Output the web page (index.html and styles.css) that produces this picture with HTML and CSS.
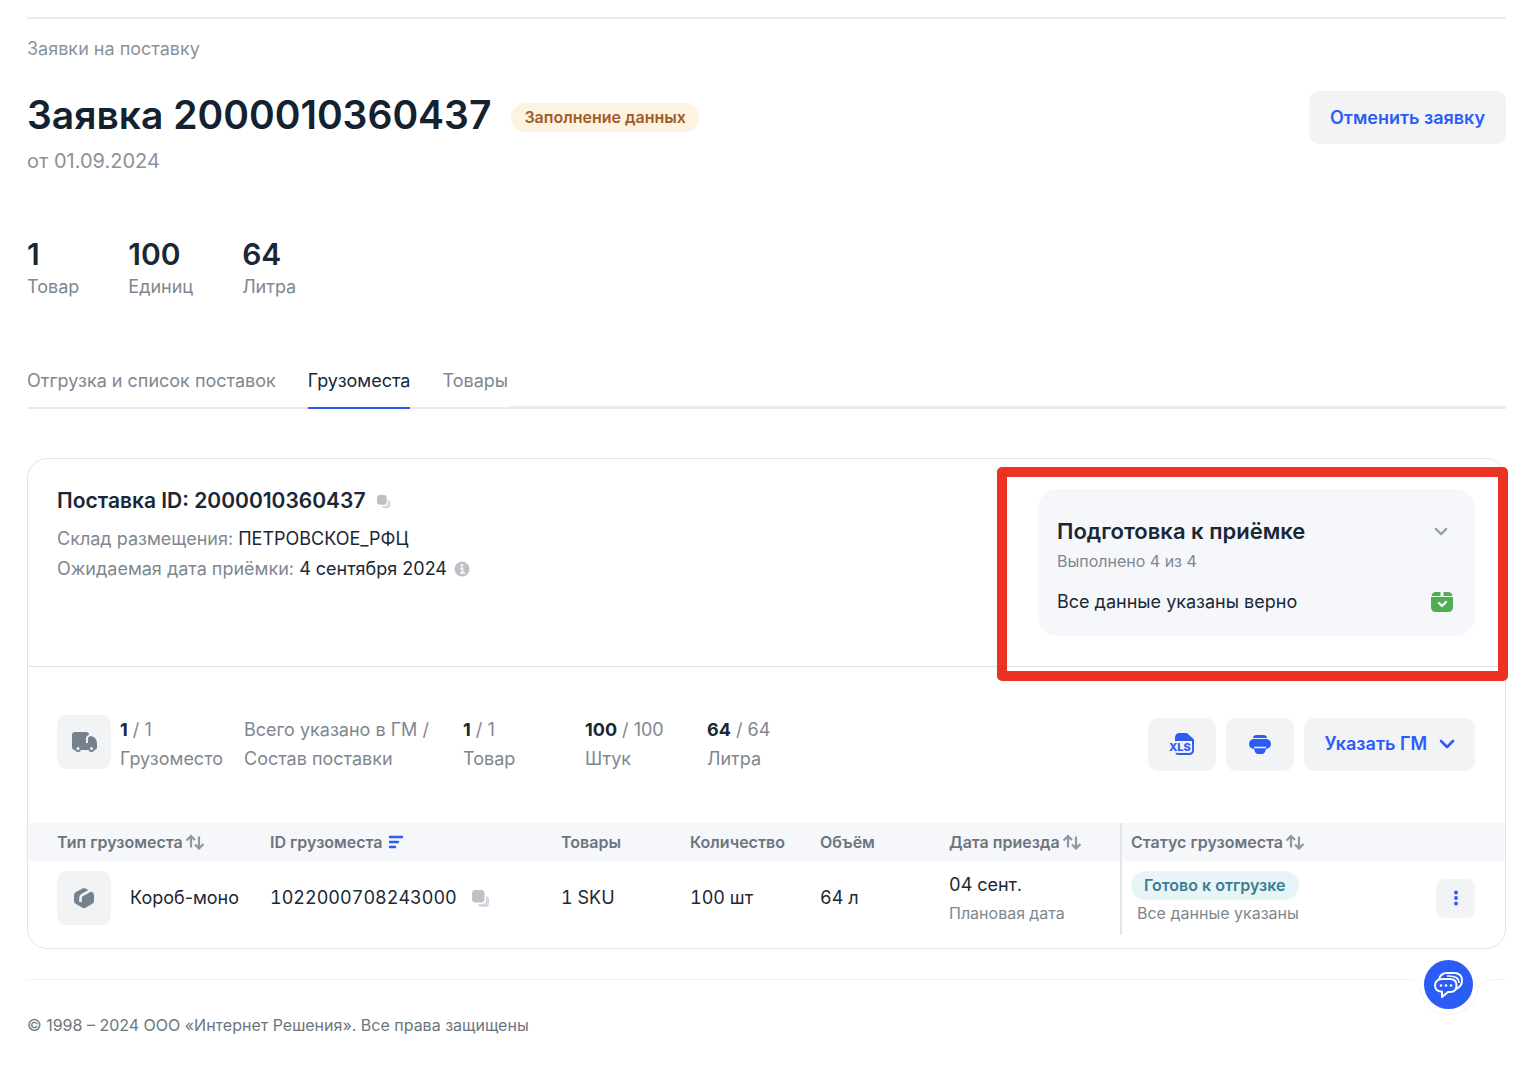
FILE: index.html
```html
<!DOCTYPE html>
<html lang="ru">
<head>
<meta charset="utf-8">
<meta name="viewport" content="width=device-width, initial-scale=1">
<title>Заявка 2000010360437</title>
<link rel="stylesheet" href="styles.css">
</head>
<body>
<svg class="sprite" aria-hidden="true">
  <symbol id="copy" viewBox="0 0 18 18">
    <rect x="6" y="6" width="11" height="11" rx="4" fill="#d3d7db"/>
    <rect x="0" y="0" width="14" height="14" rx="4" fill="#fff"/>
    <rect x="0" y="0" width="12.500" height="12.500" rx="3.500" fill="#bcc1c7"/>
  </symbol>
  <symbol id="sort" viewBox="0 0 20 16">
    <path d="M6 13.500V2M1.500 6.500 6 2l4 4M14 2.500v12M10 10.500l4 4 4.500-4.500" fill="none" stroke="#8f989f" stroke-width="2.200"/>
  </symbol>
  <symbol id="chevron" viewBox="0 0 16 10">
    <path d="M2 2l6 6 6-6" fill="none" stroke="currentColor" stroke-width="2.600" stroke-linecap="round" stroke-linejoin="round"/>
  </symbol>
</svg>
<div class="page">
  <header class="top">
    <a class="crumb" href="#">Заявки на поставку</a>
    <div class="heading">
      <h1>Заявка 2000010360437</h1>
      <span class="badge badge-draft">Заполнение данных</span>
      <button class="btn cancel" type="button">Отменить заявку</button>
    </div>
    <p class="date">от 01.09.2024</p>
  </header>

  <dl class="stats">
    <div><dd>1</dd><dt>Товар</dt></div>
    <div><dd>100</dd><dt>Единиц</dt></div>
    <div><dd>64</dd><dt>Литра</dt></div>
  </dl>

  <nav class="tabs">
    <a href="#">Отгрузка и список поставок</a>
    <a href="#" class="active" aria-current="page">Грузоместа</a>
    <a href="#">Товары</a>
  </nav>

  <main class="card">
    <section class="supply">
      <div class="supply-info">
        <h2>Поставка ID: 2000010360437
          <button class="plain" type="button" aria-label="Скопировать"><svg width="14" height="14"><use href="#copy"/></svg></button>
        </h2>
        <p>Склад размещения: <b>ПЕТРОВСКОЕ_РФЦ</b></p>
        <p>Ожидаемая дата приёмки: <b>4 сентября 2024</b>
          <svg class="info" width="16" height="16" viewBox="0 0 16 16"><circle cx="8" cy="8" r="7.500" fill="#bcc1c7"/><circle cx="8" cy="4.300" r="1.300" fill="#fff"/><path d="M6 7.200h2.500V12M6 12h5" fill="none" stroke="#fff" stroke-width="1.600"/></svg>
        </p>
      </div>
      <div class="ready">
        <div class="ready-head">
          <h2>Подготовка к приёмке</h2>
          <button class="plain fold" type="button" aria-label="Развернуть"><svg width="14" height="9"><use href="#chevron"/></svg></button>
        </div>
        <p class="ready-count">Выполнено 4 из 4</p>
        <div class="ready-row">
          <span>Все данные указаны верно</span>
          <svg width="24" height="22" viewBox="0 0 24 22"><path d="M6 1h4.500v4H1.500C2 2.500 3.500 1 6 1zM13.500 1H18c2.500 0 4 1.500 4.500 4h-9z" fill="#4fae50"/><path d="M1 6h22v10q0 5-5 5H6q-5 0-5-5z" fill="#4fae50"/><path d="M9 12l3 3 4-4" fill="none" stroke="#fff" stroke-width="2.200" stroke-linecap="round" stroke-linejoin="round"/></svg>
        </div>
      </div>
    </section>

    <section class="summary">
      <div class="figures">
        <div class="tile">
          <svg width="26" height="22" viewBox="0 0 26 22"><path d="M4 1h11q3 0 3 3l-2 1q-1 1-1 3v4h2V8q0-3 3-3 6 1 6 8v3q0 3-3 3H4q-3 0-3-3V4q0-3 3-3z" fill="#76818f"/><path d="M15.500 12V8q0-3 3-3" fill="none" stroke="#f1f3f5" stroke-width="1"/><circle cx="7" cy="18" r="3" fill="#76818f"/><circle cx="20.500" cy="18" r="3" fill="#76818f"/><circle cx="7" cy="17.500" r="1.500" fill="#f1f3f5"/><circle cx="20.500" cy="17.500" r="1.500" fill="#f1f3f5"/></svg>
        </div>
        <p><b>1</b> / 1<br>Грузоместо</p>
        <p>Всего указано в ГМ /<br>Состав поставки</p>
        <p><b>1</b> / 1<br>Товар</p>
        <p><b>100</b> / 100<br>Штук</p>
        <p><b>64</b> / 64<br>Литра</p>
      </div>
      <div class="actions">
        <button class="btn btn-icon" type="button" aria-label="Скачать XLS">
          <svg width="26" height="24" viewBox="0 0 26 24"><path d="M6 9V6q0-5 5-5h7l6 6v2z" fill="#2b5cf6"/><path d="M17 2l7 6v10q0 4-4 4H10q-2 0-3-1" fill="none" stroke="#2b5cf6" stroke-width="2"/><text x="0" y="19" class="xls">XLS</text></svg>
        </button>
        <button class="btn btn-icon" type="button" aria-label="Печать">
          <svg width="24" height="20" viewBox="0 0 24 20"><path d="M5 4q0-3 4-3h6q4 0 4 3z" fill="#2b5cf6"/><rect x="1" y="5" width="22" height="10" rx="5" fill="#2b5cf6"/><path d="M6 13h12v2q-1 5-4 5h-4q-3 0-4-5z" fill="#2b5cf6"/><path d="M6 13.500h12" stroke="#f1f3f5" stroke-width="1.500"/></svg>
        </button>
        <button class="btn" type="button">Указать ГМ <svg width="16" height="10"><use href="#chevron"/></svg></button>
      </div>
    </section>

    <table class="cargo">
      <colgroup><col class="c-type"><col class="c-id"><col class="c-goods"><col class="c-qty"><col class="c-vol"><col class="c-date"><col><col class="c-menu"></colgroup>
      <thead>
        <tr>
          <th>Тип грузоместа <svg width="20" height="16"><use href="#sort"/></svg></th>
          <th>ID грузоместа <svg class="sorted" width="16" height="14" viewBox="0 0 16 14"><path d="M2 2h12M2 7h8M2 12h5" stroke="#2b5cf6" stroke-width="2.400" stroke-linecap="round"/></svg></th>
          <th>Товары</th>
          <th>Количество</th>
          <th>Объём</th>
          <th>Дата приезда <svg width="20" height="16"><use href="#sort"/></svg></th>
          <th class="status">Статус грузоместа <svg width="20" height="16"><use href="#sort"/></svg></th>
          <th></th>
        </tr>
      </thead>
      <tbody>
        <tr>
          <td>
            <div class="type">
              <div class="tile"><svg width="22" height="22" viewBox="0 0 22 22"><path d="M9.500 1.500Q11 .6 12.500 1.500L19 5q2 1.200 2 3v6q0 2-2 3l-6 3.600q-2 1-4 0L3 17q-2-1-2-3V8q0-2 2-3z" fill="#76818f"/><path d="M7.500 15v-4q0-2 1.500-2.800L19 2.500" fill="none" stroke="#f1f3f5" stroke-width="2.600"/></svg></div>
              Короб-моно
            </div>
          </td>
          <td class="num">1022000708243000 <button class="plain" type="button" aria-label="Скопировать"><svg width="18" height="18"><use href="#copy"/></svg></button></td>
          <td class="num">1 SKU</td>
          <td class="num">100 шт</td>
          <td class="num">64 л</td>
          <td class="num">04 сент.<small>Плановая дата</small></td>
          <td class="status"><span class="badge badge-ready">Готово к отгрузке</span><small>Все данные указаны</small></td>
          <td>
            <button class="btn menu" type="button" aria-label="Действия"><svg width="6" height="18" viewBox="0 0 6 18"><g fill="#2b5cf6"><circle cx="3" cy="3.500" r="1.900"/><circle cx="3" cy="9" r="1.900"/><circle cx="3" cy="14.500" r="1.900"/></g></svg></button>
          </td>
        </tr>
      </tbody>
    </table>
  </main>

  <footer>
    <div class="rule">
      <div class="notch">
        <svg width="108" height="36" viewBox="0 0 108 36"><path d="M0 .5h8Q20 .5 22.500 12A29 29 0 0 0 79.500 12Q82 .5 94 .5h14" fill="none" stroke="#f0f2f4"/></svg>
        <button class="chat" type="button" aria-label="Чат">
          <svg width="32" height="30" viewBox="0 0 32 30"><g fill="none" stroke="#fff" stroke-width="2" stroke-linejoin="round"><path d="M10 9h7q6.500 0 6.500 6.500T17 22h-2l-6 5v-5.200Q2 21 2 15.500 2 9 10 9z"/><path d="M6 9.500Q7.500 3 14 3h7q8 0 8 7.500 0 6-6 8.500"/><path d="M14 6q12-.5 12 7" stroke-width="1.500"/></g><g fill="#fff"><circle cx="8" cy="15.500" r="1.300"/><circle cx="13" cy="15.500" r="1.300"/><circle cx="18" cy="15.500" r="1.300"/></g></svg>
        </button>
      </div>
    </div>
    <p>© 1998 – 2024 ООО «Интернет Решения». Все права защищены</p>
  </footer>
</div>
</body>
</html>
```
FILE: styles.css
```css
* { box-sizing: border-box; }

body {
  margin: 0;
  background: #fff;
  color: #1a2836;
  font: 18px/30px Inter, "Liberation Sans", sans-serif;
}

h1, h2, p, dl, dd { margin: 0; }
a { color: inherit; text-decoration: none; }
svg { flex: none; }
.sprite { position: absolute; width: 0; height: 0; }

.page { padding: 17px 30px 0 27px; }

button {
  border: 0;
  font: inherit;
  cursor: pointer;
}

.plain {
  padding: 0;
  background: none;
  color: #9aa1a9;
  line-height: 0;
  vertical-align: middle;
}

.btn {
  display: flex;
  align-items: center;
  justify-content: center;
  gap: 12px;
  height: 53px;
  padding: 0 20px;
  border-radius: 10px;
  background: #f1f3f5;
  color: #2b5cf6;
  font-weight: 600;
}

.btn-icon { width: 68px; }
.cancel { padding: 0 21px; }

.badge {
  display: block;
  width: fit-content;
  padding: 0 13px;
  border-radius: 15px;
  font-size: 16px;
  font-weight: 600;
  line-height: 29px;
}

.badge-draft { background: #fdf3e0; color: #a05c2c; }
.badge-ready { background: #e8f5f6; color: #3b7e94; }

/* Page header */
.top { border-top: 2px solid #e8edf2; padding-top: 15px; color: #8b9299; }
.crumb { display: block; }
.heading { display: flex; align-items: center; margin-top: 27px; }
.heading .badge { margin: 0 auto 0 20px; }

h1 {
  padding-bottom: 6px;
  color: #14212f;
  font-size: 39px;
  font-weight: 600;
  line-height: 46px;
}

.date { font-size: 20px; line-height: 34px; }

.stats { display: flex; gap: 49px; margin-top: 58px; }
.stats div { display: flex; flex-direction: column; }
.stats dd { font-size: 30px; font-weight: 600; line-height: 36px; }
.stats dt { color: #7f878f; }

/* Tabs */
.tabs {
  position: relative;
  display: flex;
  gap: 32px;
  margin-top: 64px;
  color: #7f878f;
}

.tabs::before {
  content: "";
  position: absolute;
  inset: auto 0 0;
  border-bottom: 2px solid #e8ecf2;
}

.tabs::after {
  content: "";
  flex: 1;
  margin-left: -30px;
  border-bottom: 3px solid #e8ebf2;
}

.tabs a {
  position: relative;
  padding-bottom: 11px;
  border-bottom: 2px solid transparent;
}

.tabs .active { border-color: #2b5cf6; color: #1a2836; }

/* Supply card */
.card {
  margin-top: 49px;
  padding-bottom: 13px;
  border: 1px solid #dfe5ee;
  border-radius: 20px;
}

.supply {
  display: flex;
  justify-content: space-between;
  padding: 30px 30px 30px 29px;
  border-bottom: 1px solid #dde3ea;
}

.supply h2 { font-size: 21px; font-weight: 600; line-height: 24px; }
.supply-info h2 { margin-bottom: 11px; }
.supply-info h2 .plain { margin-left: 6px; }
.supply-info p { color: #7f878f; }
.supply-info b { color: #1a2836; font-weight: 400; }
.info { margin-left: 2px; vertical-align: -2px; }

.ready {
  position: relative;
  width: 437px;
  padding: 26px 19px 19px;
  border-radius: 20px;
  background: #f5f7fb;
}

/* Highlight frame drawn around the readiness panel */
.ready::after {
  content: "";
  position: absolute;
  inset: -22px -33px -45px -41px;
  border: 10px solid #eb3323;
  border-radius: 5px;
  pointer-events: none;
}

.ready-head, .ready-row { display: flex; align-items: center; justify-content: space-between; padding-right: 2px; }
.ready-head h2 { font-size: 22px; line-height: 32px; }
.fold { margin-right: 6px; }
.ready-count { color: #7f878f; font-size: 16px; line-height: 28px; }
.ready-row { margin-top: 12px; }

.summary {
  display: flex;
  align-items: center;
  justify-content: space-between;
  height: 156px;
  padding: 0 30px 2px 29px;
}

.figures {
  display: grid;
  grid-template-columns: 63px 124px 219px 122px 122px auto;
  align-items: start;
  color: #7f878f;
}

.figures p { line-height: 29px; white-space: nowrap; }
.figures b { color: #1a2836; font-weight: 700; }

.tile {
  display: grid;
  place-items: center;
  width: 54px;
  height: 54px;
  border-radius: 10px;
  background: #f1f3f5;
}

.actions { display: flex; gap: 10px; }
.xls { fill: #2b5cf6; stroke: #f1f3f5; stroke-width: 3px; paint-order: stroke; font: 800 11px Inter, sans-serif; }

/* Cargo table */
.cargo { width: 100%; table-layout: fixed; border-spacing: 0; text-align: left; }
.c-type { width: 242px; }
.c-id { width: 291px; }
.c-goods, .c-vol { width: 129px; }
.c-qty { width: 130px; }
.c-date { width: 171px; }
.c-menu { width: 69px; }

.cargo th {
  height: 38px;
  padding: 0;
  background: #f5f7fb;
  color: #6c757e;
  font-size: 16px;
  font-weight: 600;
  line-height: 24px;
  white-space: nowrap;
}

.cargo th svg { margin-left: -2px; vertical-align: -2px; }
.cargo th .sorted { margin-left: 1px; vertical-align: -1px; }
.cargo td { height: 74px; padding: 0; }
.cargo .num { font-variant-numeric: tabular-nums; }
.cargo th:first-child, .cargo td:first-child { padding-left: 29px; }
.cargo .status { padding-left: 9px; border-left: 2px solid #e1e6ec; }
.cargo td .plain { margin-left: 10px; }
.cargo small { display: block; color: #7f878f; font-size: 16px; line-height: 26px; }
.cargo .badge + small { padding-left: 6px; }
.type { display: flex; align-items: center; gap: 19px; }
.menu { width: 39px; height: 39px; padding: 0; border-radius: 8px; }

/* Footer */
footer { margin-top: 30px; color: #6c757e; font-size: 16px; }
.rule { display: flex; height: 36px; }
.rule::before { content: ""; flex: 1; border-top: 1px solid #f0f2f4; }
.notch { position: relative; height: 36px; }

.chat {
  position: absolute;
  top: -19px;
  left: 26px;
  display: grid;
  place-items: center;
  width: 49px;
  height: 49px;
  padding: 0;
  border-radius: 50%;
  background: #2b5cf6;
}

footer p { padding-bottom: 28px; line-height: 20px; }
```
